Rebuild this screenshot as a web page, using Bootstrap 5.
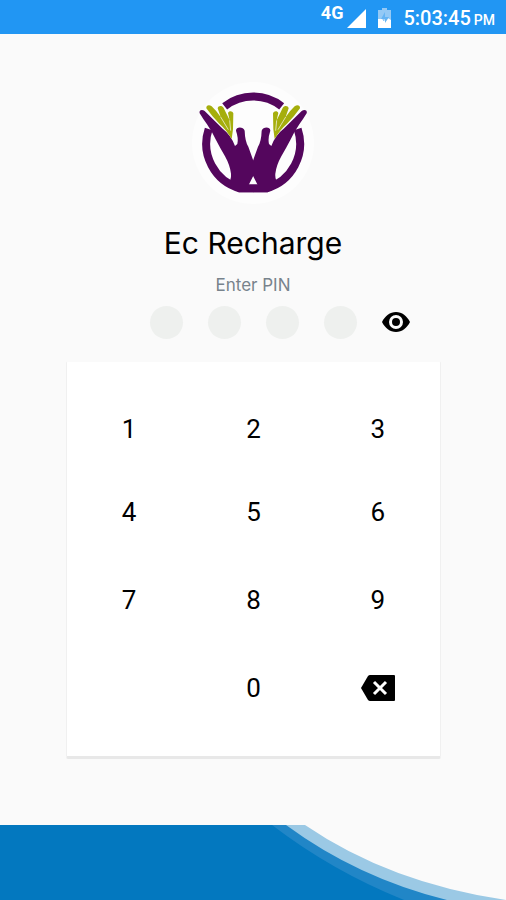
<!DOCTYPE html>
<html lang="en">
<head>
<meta charset="utf-8">
<meta name="viewport" content="width=device-width, initial-scale=1">
<title>Ec Recharge</title>
<link href="https://cdn.jsdelivr.net/npm/bootstrap@5.3.0/dist/css/bootstrap.min.css" rel="stylesheet">
<style>
  body { background: #fafafa; color: #000; font-family: Roboto, "Liberation Sans", sans-serif; }
  .status-bar { background: #2196f3; height: 34px; padding-right: 11px; }
  .network { font-size: 18px; line-height: 20px; height: 28px; }
  .clock { font-size: 20px; line-height: 24px; padding-top: 4px; }
  .clock-suffix { font-size: 14px; margin-left: 3px; }
  .brand-logo { width: 124px; height: 124px; margin-top: 47px; }
  .brand-name { font: 400 30px/36px Inter, sans-serif; margin: 20px 0 0; }
  .pin-label { font: 400 17px/20px Inter, sans-serif; color: #78838c; margin: 14px 0 10px; }
  .pin-row { gap: 25px; height: 34px; padding-left: 54px; }
  .pin-dot { width: 33px; height: 33px; background: #eef0ee; text-align: center; outline-offset: 2px; }
  .keypad { margin: 22px 65px 0 66px; padding: 25px 0 27px; background: #fff; border: 1px solid #f0f0f0; border-top-color: #fafafa; border-bottom: 3px solid #e8e8e8; border-radius: 2px;
    display: grid; grid-template-columns: repeat(3, 1fr); grid-template-rows: 84px 82px 94px 82px; }
  .keypad-key { font-size: 26px; font-weight: 400; color: #000; --bs-btn-active-bg: #eee; }
  .key-zero { grid-column: 2; }
  .wave { height: 75px; }
</style>
<script src="https://cdn.jsdelivr.net/npm/bootstrap@5.3.0/dist/js/bootstrap.bundle.min.js"></script>
</head>
<body class="d-flex flex-column min-vh-100">
<header class="status-bar d-flex align-items-center justify-content-end text-white fw-medium">
  <span class="network me-1 fw-bold">4G</span>
  <svg class="me-2" width="20" height="34" viewBox="0 0 20 34" fill="#fff" aria-hidden="true"><path d="M0 28 19 9V28Z"/></svg>
  <svg class="me-2" width="20" height="34" viewBox="0 0 20 34" aria-hidden="true"><path d="M7 8h5v2h4v10H3V10h4Z" fill="#94c9f5"/><path d="M3 19h4l2 2 2-4 5 3v8H3Z" fill="#fff"/><path d="M10 12 6 19h4v4l4-6h-4Z" fill="#65b4f4"/></svg>
  <span class="clock">5:03:45<span class="clock-suffix">PM</span></span>
</header>

<main>
  <div class="text-center">
    <svg class="brand-logo" viewBox="31 19 372 372" role="img" aria-label="Ec Recharge logo">
      <circle cx="217" cy="205" r="183" fill="#fdfdfd"/>
      <g fill="none" stroke="#54065d" stroke-width="24">
        <path d="M132 95A139 139 0 0 1 303 95"/>
        <path d="M84 163A139 139 0 0 0 178 341H257A139 139 0 0 0 351 163"/>
      </g>
      <g id="hand">
        <path fill="#54065d" d="M57 116C54 105 65 103 72 109L126 162Q151 181 163 214L170 208Q174 191 166 168C166 155 188 155 192 168Q193 200 203 216Q212 241 218 258V303L204 331H218V353H174L138 332Q153 317 151 297Q148 272 133 245Q119 221 106 196Q94 171 79 149Q66 131 57 116Z"/>
        <path fill="#a5ae0c" d="M77 101C76 91 86 90 93 95Q107 108 120 127L111 101C113 92 124 92 129 100L147 137L142 115C145 107 156 109 158 116L157 164L153 193Q137 165 116 147Q93 124 77 101Z"/>
        <path fill="none" stroke="#fdfdfd" stroke-width="2" d="M120 127 143 165M147 137 150 168"/>
      </g>
      <use href="#hand" transform="matrix(-1 0 0 1 435 0)"/>
    </svg>
    <h1 class="brand-name">Ec Recharge</h1>
  </div>

  <form>
    <fieldset>
      <legend class="pin-label text-center">Enter PIN</legend>
      <div class="pin-row d-flex justify-content-center align-items-center">
        <input class="pin-dot rounded-circle border-0 p-0" type="password" inputmode="numeric" maxlength="1" aria-label="PIN digit 1">
        <input class="pin-dot rounded-circle border-0 p-0" type="password" inputmode="numeric" maxlength="1" aria-label="PIN digit 2">
        <input class="pin-dot rounded-circle border-0 p-0" type="password" inputmode="numeric" maxlength="1" aria-label="PIN digit 3">
        <input class="pin-dot rounded-circle border-0 p-0" type="password" inputmode="numeric" maxlength="1" aria-label="PIN digit 4">
        <button class="btn border-0 p-0 d-flex" type="button" aria-label="Show PIN">
          <svg width="28" height="20" viewBox="0 0 28 20"><path fill-rule="evenodd" d="M14 0C8 0 3 4 0 10c3 6 8 10 14 10s11-4 14-10C25 4 20 0 14 0Zm0 3a7 7 0 1 1 0 14 7 7 0 0 1 0-14Zm0 3a4 4 0 1 0 0 8 4 4 0 0 0 0-8Z"/></svg>
        </button>
      </div>
    </fieldset>

    <div class="keypad">
      <button class="keypad-key btn border-0 p-0" type="button">1</button>
      <button class="keypad-key btn border-0 p-0" type="button">2</button>
      <button class="keypad-key btn border-0 p-0" type="button">3</button>
      <button class="keypad-key btn border-0 p-0" type="button">4</button>
      <button class="keypad-key btn border-0 p-0" type="button">5</button>
      <button class="keypad-key btn border-0 p-0" type="button">6</button>
      <button class="keypad-key btn border-0 p-0" type="button">7</button>
      <button class="keypad-key btn border-0 p-0" type="button">8</button>
      <button class="keypad-key btn border-0 p-0" type="button">9</button>
      <button class="keypad-key key-zero btn border-0 p-0" type="button">0</button>
      <button class="keypad-key btn border-0 p-0 d-flex align-items-center justify-content-center" type="button" aria-label="Delete">
        <svg width="34" height="26" viewBox="0 0 34 26"><path d="M9 0H33Q34 0 34 1V25Q34 26 33 26H9Q8 26 7 25L0 13 7 1Q8 0 9 0Z"/><path d="m13 7 12 12M25 7 13 19" stroke="#fff" stroke-width="3"/></svg>
      </button>
    </div>
  </form>
</main>

<footer class="mt-auto">
  <svg class="wave d-block w-100" viewBox="0 0 506 75" preserveAspectRatio="none" aria-hidden="true">
    <path fill="#9bc9e5" d="M0 0H305Q390 58 506 75H0Z"/>
    <path fill="#2186c7" d="M0 0H286Q358 53 447 75H0Z"/>
    <path fill="#0378bf" d="M0 0H272Q332 46 404 75H0Z"/>
  </svg>
</footer>
</body>
</html>
